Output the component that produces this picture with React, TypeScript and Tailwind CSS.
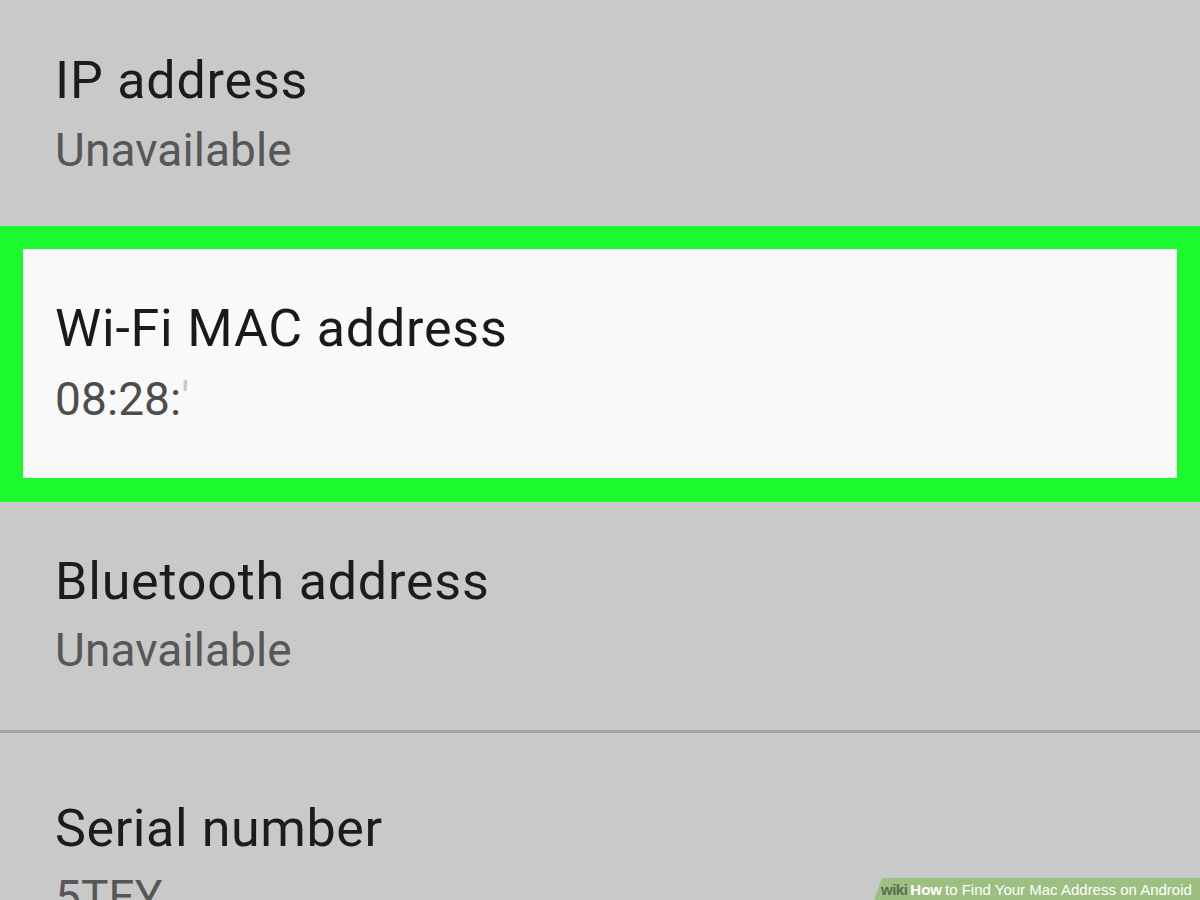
import React from "react";

const font = { fontFamily: "Roboto, 'Noto Sans', sans-serif" };

export default function App() {
  return (
    <div
      className="relative w-[1200px] h-[900px] overflow-hidden bg-[#c9c9c9]"
      style={font}
    >
      {/* IP address */}
      <div className="h-[226px] pt-[55px] pl-[55px]">
        <div className="text-[52px] leading-[52px] text-[#1c1c1c] tracking-[0.8px]">IP address</div>
        <div className="mt-[20px] text-[46px] leading-[46px] text-[#575757] tracking-[0.1px]">Unavailable</div>
      </div>

      {/* Wi-Fi MAC address highlighted */}
      <div className="h-[276px] border-[#1cf92e] border-t-[23px] border-b-[24px] border-l-[23px] border-r-[23px] bg-[#f9f9f9]">
        <div className="pt-[54px] pl-[32px]">
          <div className="text-[52px] leading-[52px] text-[#1a1a1a] tracking-[0.8px]">Wi-Fi MAC address</div>
          <div className="mt-[21px] text-[46px] leading-[46px] text-[#4d4d4d] tracking-[0.1px]">
            08:28:<span className="text-[#c8c8c8]">'</span>
          </div>
        </div>
      </div>

      {/* Bluetooth address */}
      <div className="h-[228px] pt-[54px] pl-[55px]">
        <div className="text-[52px] leading-[52px] text-[#1c1c1c] tracking-[0.8px]">Bluetooth address</div>
        <div className="mt-[19px] text-[46px] leading-[46px] text-[#575757] tracking-[0.1px]">Unavailable</div>
      </div>

      <div className="h-[3px] bg-[#a4a4a4]" />

      {/* Serial number */}
      <div className="pt-[70px] pl-[55px]">
        <div className="text-[52px] leading-[52px] text-[#1c1c1c] tracking-[0.6px]">Serial number</div>
        <div className="mt-[19px] text-[46px] leading-[46px] text-[#575757] tracking-[0.1px]">5TEY</div>
      </div>

      {/* watermark */}
      <div
        className="absolute right-0 bottom-0 h-[22px] w-[326px] bg-[#9dbf82] [clip-path:polygon(8px_0,100%_0,100%_100%,0_100%)] flex items-center pl-[7px] gap-[3px] text-[15px] leading-none whitespace-nowrap"
        style={{ fontFamily: "'Liberation Sans', Arial, sans-serif" }}
      >
        <span className="text-[#5a6a50] font-bold tracking-[-0.5px]">wiki</span>
        <span className="text-white font-bold">How</span>
        <span className="text-white">to Find Your Mac Address on Android</span>
      </div>
    </div>
  );
}
